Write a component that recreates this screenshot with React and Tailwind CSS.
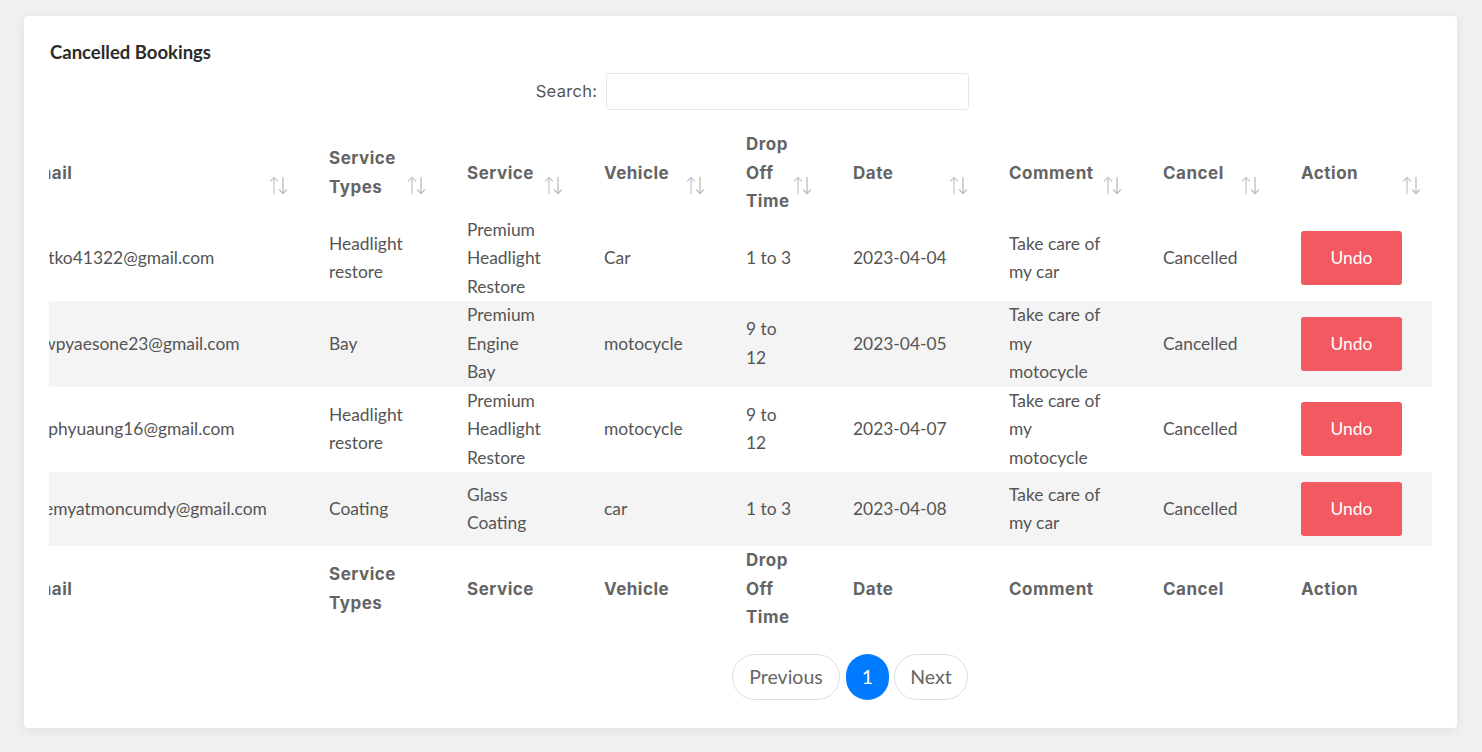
const COLUMNS = [
  { label: 'Email', width: 307 },
  { label: 'Service Types', width: 138 },
  { label: 'Service', width: 137 },
  { label: 'Vehicle', width: 142 },
  { label: 'Drop Off Time', width: 107 },
  { label: 'Date', width: 156 },
  { label: 'Comment', width: 154 },
  { label: 'Cancel', width: 138 },
  { label: 'Action', width: 161 },
]

const BOOKINGS = [
  { email: 'ayetko41322@gmail.com', type: 'Headlight restore', service: 'Premium Headlight Restore', vehicle: 'Car', time: '1 to 3', date: '2023-04-04', comment: 'Take care of my car' },
  { email: 'thiwpyaesone23@gmail.com', type: 'Bay', service: 'Premium Engine Bay', vehicle: 'motocycle', time: '9 to 12', date: '2023-04-05', comment: 'Take care of my motocycle' },
  { email: 'kayphyuaung16@gmail.com', type: 'Headlight restore', service: 'Premium Headlight Restore', vehicle: 'motocycle', time: '9 to 12', date: '2023-04-07', comment: 'Take care of my motocycle' },
  { email: 'kyiemyatmoncumdy@gmail.com', type: 'Coating', service: 'Glass Coating', vehicle: 'car', time: '1 to 3', date: '2023-04-08', comment: 'Take care of my car' },
]

const headFont = { fontFamily: 'Inter, "Noto Sans", sans-serif' }

// the two thin arrows datatables draws next to a sortable heading
function SortIcon() {
  return (
    <svg className="absolute bottom-[21px] right-[23px]" width="19" height="19" viewBox="0 0 19 19" fill="none" strokeWidth="1.3" strokeLinecap="round" strokeLinejoin="round">
      <g stroke="#c3cad3">
        <path d="M5 17.5V1.5" />
        <path d="M1.5 5L5 1.5L8.5 5" />
      </g>
      <g stroke="#c2bcb8">
        <path d="M14 1.5V17.5" />
        <path d="M10.5 14L14 17.5L17.5 14" />
      </g>
    </svg>
  )
}

function HeaderRow({ sortable }) {
  return (
    <tr>
      {COLUMNS.map((c, i) => (
        <th
          key={c.label}
          className={`relative py-0 pr-[40px] text-left align-middle text-[17px] font-bold leading-[28.5px] tracking-[0.5px] text-[#646464] ${i === 0 ? 'pl-[21px]' : 'pl-[18px]'}`}
          style={headFont}
        >
          {c.label}
          {sortable && <SortIcon />}
        </th>
      ))}
    </tr>
  )
}

function Cell({ children }) {
  return <td className="py-0 pl-[18px] pr-[40px] align-middle">{children}</td>
}

export default function App() {
  return (
    <div className="min-h-screen bg-[#f0f0f0] pt-4 pl-6 pr-[25px] pb-[25px]" style={{ fontFamily: 'Lato, "Liberation Sans", sans-serif' }}>
      <div className="rounded-[4px] bg-white px-[25px] pt-[25px] pb-[28px] shadow-[0_2px_12px_rgba(0,0,0,0.07)]">
        <h2 className="pl-px text-[18.5px] font-bold leading-[22px] text-[#2b2b2b]">Cancelled Bookings</h2>

        <div className="mt-[10px] flex justify-center pl-6">
          <label className="flex items-center gap-[9px] text-[16.5px] tracking-[0.3px] text-[#555]" style={headFont}>
            Search:
            <input type="search" className="h-[37px] w-[363px] rounded-[3px] border border-[#e6e8ec] bg-white px-2 outline-none" />
          </label>
        </div>

        <div className="mt-[20px] overflow-hidden">
          <table className="-ml-[45px] table-fixed border-collapse text-[17.4px] leading-[28.5px] text-[#555]" style={{ width: 1440 }}>
            <colgroup>
              {COLUMNS.map((c) => (
                <col key={c.label} style={{ width: c.width }} />
              ))}
            </colgroup>
            <thead className="h-[85px]">
              <HeaderRow sortable />
            </thead>
            <tbody>
              {BOOKINGS.map((b, i) => (
                <tr key={b.email} className={i % 2 === 1 ? 'bg-[#f4f4f4]' : ''}>
                  <Cell>{b.email}</Cell>
                  <Cell>{b.type}</Cell>
                  <Cell>{b.service}</Cell>
                  <Cell>{b.vehicle}</Cell>
                  <Cell>{b.time}</Cell>
                  <Cell>{b.date}</Cell>
                  <Cell>{b.comment}</Cell>
                  <Cell>Cancelled</Cell>
                  <Cell>
                    <button className="my-[10px] h-[54px] w-[101px] rounded-[3px] bg-[#f25961] text-[17.4px] text-white">Undo</button>
                  </Cell>
                </tr>
              ))}
            </tbody>
            <tfoot className="h-[85px]">
              <HeaderRow sortable={false} />
            </tfoot>
          </table>
        </div>

        <div className="mt-[22px] flex justify-center gap-[5px] pl-[219px] text-[19.5px] text-[#666]">
          <button className="h-[46px] w-[108px] rounded-full border border-[#dedede] bg-white">Previous</button>
          <button className="ml-px h-[46px] w-[43px] rounded-full bg-[#007bff] text-white">1</button>
          <button className="h-[46px] w-[74px] rounded-full border border-[#dedede] bg-white">Next</button>
        </div>
      </div>
    </div>
  )
}
